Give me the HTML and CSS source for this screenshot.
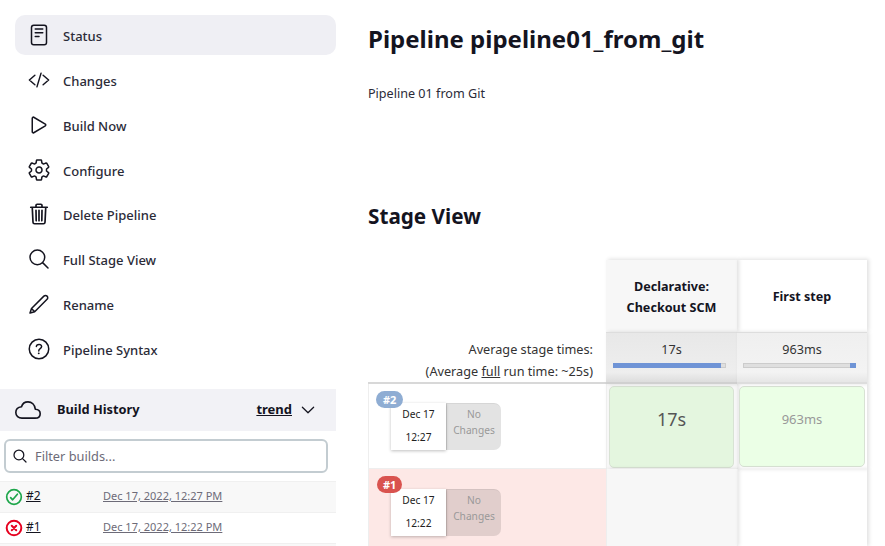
FILE: index.html
```html
<!DOCTYPE html>
<html lang="en">
<head>
  <meta charset="UTF-8" />
  <title>pipeline01_from_git</title>
  <link rel="stylesheet" href="styles.css">
</head>
<body>
<div class="page">

  <aside class="sidebar">
    <nav class="tasks">
      <a class="task active">
        <svg class="icon" viewBox="0 0 512 512"><rect x="96" y="48" width="320" height="416" rx="48"/><path d="M176 128h160M176 208h160M176 288h80"/></svg>
        <span>Status</span>
      </a>
      <a class="task">
        <svg class="icon code" viewBox="0 0 512 512"><path d="M160 368L32 256l128-112M352 368l128-112-128-112M304 96l-96 320"/></svg>
        <span>Changes</span>
      </a>
      <a class="task">
        <svg class="icon" viewBox="0 0 512 512"><path d="M112 111v290c0 17.44 17 28.52 31 20.16l247.9-148.37c12.12-7.25 12.12-26.33 0-33.58L143 90.84c-14-8.36-31 2.72-31 20.16z"/></svg>
        <span>Build Now</span>
      </a>
      <a class="task">
        <svg class="icon" viewBox="0 0 512 512"><path d="M262.29 192.31a64 64 0 1057.4 57.4 64.13 64.13 0 00-57.4-57.4zM416.39 256a154.34 154.34 0 01-1.53 20.79l45.21 35.46a10.81 10.81 0 012.45 13.75l-42.77 74a10.81 10.81 0 01-13.14 4.59l-44.9-18.08a16.11 16.11 0 00-15.17 1.75A164.48 164.48 0 01325 400.8a15.94 15.94 0 00-8.82 12.14l-6.73 47.89a11.08 11.08 0 01-10.68 9.17h-85.54a11.11 11.11 0 01-10.69-8.87l-6.72-47.82a16.07 16.07 0 00-9-12.22 155.3 155.3 0 01-21.46-12.57 16 16 0 00-15.11-1.71l-44.89 18.07a10.81 10.81 0 01-13.14-4.58l-42.77-74a10.8 10.8 0 012.45-13.75l38.21-30a16.05 16.05 0 006-14.08c-.36-4.17-.58-8.33-.58-12.5s.21-8.27.58-12.35a16 16 0 00-6.07-13.94l-38.19-30A10.81 10.81 0 0149.48 186l42.77-74a10.81 10.81 0 0113.14-4.59l44.9 18.08a16.11 16.11 0 0015.17-1.75A164.48 164.48 0 01187 111.2a15.94 15.94 0 008.82-12.14l6.73-47.89A11.08 11.08 0 01213.23 42h85.54a11.11 11.11 0 0110.69 8.87l6.72 47.82a16.07 16.07 0 009 12.22 155.3 155.3 0 0121.46 12.57 16 16 0 0015.11 1.71l44.89-18.07a10.81 10.81 0 0113.14 4.58l42.77 74a10.8 10.8 0 01-2.45 13.75l-38.21 30a16.05 16.05 0 00-6.05 14.08c.33 4.14.55 8.3.55 12.47z"/></svg>
        <span>Configure</span>
      </a>
      <a class="task">
        <svg class="icon trash" viewBox="0 0 512 512"><path d="M112 112l16 320c.95 18.49 14.4 32 32 32h192c17.67 0 30.87-13.51 32-32l16-320M80 112h352M192 112V72a23.93 23.93 0 0124-24h80a23.93 23.93 0 0124 24v40M256 176v224M192 176l4 224M320 176l-4 224"/></svg>
        <span>Delete Pipeline</span>
      </a>
      <a class="task">
        <svg class="icon" viewBox="0 0 512 512"><path d="M221.09 64a157.09 157.09 0 10157.09 157.09A157.1 157.1 0 00221.09 64zM338.29 338.29L448 448"/></svg>
        <span>Full Stage View</span>
      </a>
      <a class="task">
        <svg class="icon" viewBox="0 0 512 512"><path d="M64 448l32-96L360 88a48 48 0 0168 68L164 420zM96 352l68 68"/></svg>
        <span>Rename</span>
      </a>
      <a class="task">
        <svg class="icon" viewBox="0 0 512 512"><circle cx="256" cy="256" r="208"/><path d="M200 202.29s.84-17.5 19.57-32.57C230.68 160.77 244 158.18 256 158c10.93-.14 20.69 1.67 26.53 4.45 10 4.76 29.47 16.38 29.47 41.09 0 26-17 37.81-36.37 50.8S251 281.43 251 296"/><circle class="dot" cx="250" cy="348" r="20"/></svg>
        <span>Pipeline Syntax</span>
      </a>
    </nav>

    <section class="history">
      <header class="history-head">
        <svg class="icon cloud" viewBox="0 0 512 512"><path d="M400 240c-8.89-89.54-71-144-144-144-69 0-113.44 48.2-128 96-60 6-112 43.59-112 112 0 66 54 112 120 112h260c55 0 100-27.44 100-88 0-59.82-53-85.76-96-88z"/></svg>
        <span class="history-title">Build History</span>
        <a class="trend">trend</a>
        <svg class="icon chevron" viewBox="0 0 512 512"><path d="M112 184l144 144 144-144"/></svg>
      </header>
      <div class="filter">
        <svg class="icon filter-icon" viewBox="0 0 512 512"><path d="M221.09 64a157.09 157.09 0 10157.09 157.09A157.1 157.1 0 00221.09 64zM338.29 338.29L448 448"/></svg>
        <span class="filter-text">Filter builds...</span>
      </div>
      <div class="build odd">
        <svg class="icon status ok" viewBox="0 0 512 512"><circle cx="256" cy="256" r="208"/><path d="M352 176L217.6 336 160 272"/></svg>
        <a class="build-no">#2</a>
        <a class="build-date">Dec 17, 2022, 12:27 PM</a>
      </div>
      <div class="build">
        <svg class="icon status fail" viewBox="0 0 512 512"><circle cx="256" cy="256" r="208"/><path d="M320 320L192 192M192 320l128-128"/></svg>
        <a class="build-no">#1</a>
        <a class="build-date">Dec 17, 2022, 12:22 PM</a>
      </div>
      <div class="build odd tail"></div>
    </section>
  </aside>

  <main class="content">
    <h1>Pipeline pipeline01_from_git</h1>
    <p class="description">Pipeline 01 from Git</p>
    <h2>Stage View</h2>

    <div class="stage-view">
      <div class="corner"></div>
      <div class="stage-name shade">Declarative:<br>Checkout SCM</div>
      <div class="stage-name">First step</div>

      <div class="avg-label">Average stage times:<br>(Average <u>full</u> run time: ~25s)</div>
      <div class="avg shade">
        <span>17s</span>
        <div class="bar"><div class="bar-fill" style="width: 96%"></div></div>
      </div>
      <div class="avg second">
        <span>963ms</span>
        <div class="bar"><div class="bar-fill right" style="width: 5%"></div></div>
      </div>

      <div class="run">
        <span class="badge blue">#2</span>
        <div class="run-date">Dec 17<br>12:27</div>
        <div class="run-changes">No<br>Changes</div>
      </div>
      <div class="cell shade"><div class="result big">17s</div></div>
      <div class="cell"><div class="result small">963ms</div></div>

      <div class="run failed">
        <span class="badge red">#1</span>
        <div class="run-date">Dec 17<br>12:22</div>
        <div class="run-changes">No<br>Changes</div>
      </div>
      <div class="cell shade"></div>
      <div class="cell"></div>
    </div>
  </main>

</div>
</body>
</html>
```

FILE: styles.css
```css
html, body {
  margin: 0;
  height: 100%;
  overflow: hidden;
}

body {
  font-family: "Noto Sans", "Open Sans", sans-serif;
  font-size: 13px;
  color: #14141f;
  background: #fff;
}

.page {
  display: flex;
  height: 546px;
  overflow: hidden;
}

/* sidebar */
.sidebar {
  width: 336px;
  flex: none;
}

.tasks {
  display: flex;
  flex-direction: column;
  gap: 4.85px;
  padding: 15px 0 0 15px;
}

.task {
  display: flex;
  align-items: center;
  gap: 12px;
  height: 40px;
  padding-left: 12px;
  border-radius: 10px;
  color: #2b2b38;
  font-weight: 500;
}

.task span {
  padding-top: 2px;
}

.task.active {
  background: #efeff4;
}

.icon {
  width: 24px;
  height: 24px;
  flex: none;
  fill: none;
  stroke: #14141f;
  stroke-width: 32;
  stroke-linecap: round;
  stroke-linejoin: round;
}

.icon .dot {
  fill: #14141f;
  stroke: none;
}

.icon.code {
  width: 22px;
  height: 22px;
  margin: 0 1px;
  stroke-width: 34;
}

.icon.trash {
  stroke-width: 36;
}

.history {
  margin-top: 20px;
}

.history-head {
  display: flex;
  align-items: center;
  height: 42px;
  background: #f2f2f6;
}

.cloud {
  width: 26px;
  height: 26px;
  margin-left: 15px;
}

.history-title {
  margin-left: 16px;
  padding-bottom: 2px;
  font-size: 12.8px;
  font-weight: 700;
}

.trend {
  margin-left: auto;
  padding-bottom: 2px;
  font-weight: 700;
  text-decoration: underline;
}

.chevron {
  width: 20px;
  height: 20px;
  margin: 0 18px 0 6px;
}

.filter {
  display: flex;
  align-items: center;
  height: 30px;
  margin: 8px 8px 8px 4px;
  padding-left: 6px;
  border: 2px solid #c3ccd1;
  border-radius: 6px;
}

.filter-icon {
  width: 16px;
  height: 16px;
  stroke-width: 40;
}

.filter-text {
  margin-left: 7px;
  font-size: 12.8px;
  color: #6d6b78;
}

.build {
  display: flex;
  align-items: center;
  height: 31px;
  padding-left: 5px;
  border-top: 1px solid #f0f0f0;
  box-sizing: border-box;
  font-size: 11px;
}

.build.odd {
  background: #f8f8f8;
}

.build.tail {
  height: 3px;
}

.build a {
  padding-bottom: 3px;
}

.status {
  width: 18px;
  height: 18px;
  stroke-width: 48;
}

.status.ok {
  stroke: #1ea64b;
}

.status.fail {
  stroke: #e6001f;
  stroke-width: 56;
}

.build-no {
  width: 77px;
  margin-left: 3px;
  font-size: 12px;
  color: #14141f;
  text-decoration: underline;
}

.build-date {
  color: #6d6b78;
  text-decoration: underline;
}

/* main column */
.content {
  flex: 1;
  min-width: 0;
  padding-left: 32px;
}

h1 {
  margin: 22px 0 0;
  font-size: 24px;
  line-height: 34px;
  font-weight: 700;
}

.description {
  margin: 29px 0 0;
  font-size: 12.6px;
  line-height: 18px;
  color: #2b2b38;
}

h2 {
  margin: 99px 0 0;
  font-size: 20.7px;
  line-height: 28px;
  font-weight: 700;
}

/* stage view */
.stage-view {
  display: grid;
  grid-template-columns: 238px 131px 130px;
  grid-template-rows: 72px 52px 85px 77px;
  margin-top: 30px;
  font-size: 12.6px;
}

.corner {
  background: #fff;
}

.stage-name {
  position: relative;
  display: flex;
  align-items: center;
  justify-content: center;
  padding-top: 1px;
  text-align: center;
  font-weight: 700;
  line-height: 21px;
  box-shadow: 2px -1px 4px rgba(0, 0, 0, 0.12);
}

.shade {
  background: #f7f7f7;
}

.avg-label {
  padding: 6px 13px 0 0;
  text-align: right;
  font-size: 12.7px;
  line-height: 22px;
  color: #333;
  border-bottom: 2px solid #d8d8d8;
}

.avg {
  position: relative;
  padding-top: 6px;
  text-align: center;
  line-height: 21px;
  color: #333;
  background: linear-gradient(#efefef, #f3f3f3 80%, #e6e6e6);
  box-shadow: 2px 0 4px rgba(0, 0, 0, 0.12);
  border-top: 1px solid #ddd;
  border-bottom: 2px solid #ddd;
  box-sizing: border-box;
}

.avg.shade {
  background: linear-gradient(#e8e8e8, #eee 80%, #ddd);
  border-bottom-color: #d0d0d0;
}

.bar {
  display: flex;
  width: 113px;
  height: 5px;
  margin: 3px 0 0 7px;
  background: #dfdfdf;
  box-shadow: inset 0 0 0 1px #ccc;
}

.avg.second .bar {
  margin-left: 6px;
}

.bar-fill {
  background: #6f94d6;
}

.bar-fill.right {
  margin-left: auto;
}

.run {
  position: relative;
  display: flex;
  padding: 19px 0 0 22px;
  border-left: 1px solid #eee;
  border-bottom: 1px solid #eee;
  box-sizing: border-box;
}

.run.failed {
  padding-top: 20px;
  background: #fde8e6;
  border-bottom: none;
}

.badge {
  position: absolute;
  left: 7px;
  top: 7px;
  padding: 0 7px;
  border-radius: 9px;
  color: #fff;
  font-size: 11px;
  line-height: 17px;
  font-weight: 700;
}

.badge.blue {
  background: #8fadd3;
}

.badge.red {
  background: #d9534f;
  left: 8px;
  padding: 0 6px;
}

.run-date {
  width: 55px;
  height: 47px;
  background: #fff;
  text-align: center;
  font-size: 10.2px;
  line-height: 23px;
  color: #222;
  box-shadow: 0 1px 3px rgba(0, 0, 0, 0.25);
}

.run-changes {
  width: 55px;
  height: 47px;
  padding-top: 2px;
  background: rgba(0, 0, 0, 0.11);
  border-top: 1px solid rgba(0, 0, 0, 0.06);
  border-left: 1px solid rgba(0, 0, 0, 0.1);
  border-radius: 0 7px 7px 0;
  box-sizing: border-box;
  text-align: center;
  font-size: 10.2px;
  line-height: 16px;
  color: #999;
}

.cell {
  padding: 2px 3px 0 2px;
  box-sizing: border-box;
  box-shadow: 2px 0 4px rgba(0, 0, 0, 0.12);
  border-left: 1px solid #eee;
}

.cell:not(.shade) {
  padding-left: 1px;
  padding-right: 2px;
}

.result {
  display: flex;
  align-items: center;
  justify-content: center;
  border: 1px solid #d8e2d4;
  border-radius: 5px;
  box-sizing: border-box;
  padding-bottom: 16px;
}

.result.big {
  height: 82px;
  background: #e4f6df;
  font-size: 18px;
  color: #555;
}

.result.small {
  height: 81px;
  background: #ebffe6;
  font-size: 13px;
  color: #999;
}
```
